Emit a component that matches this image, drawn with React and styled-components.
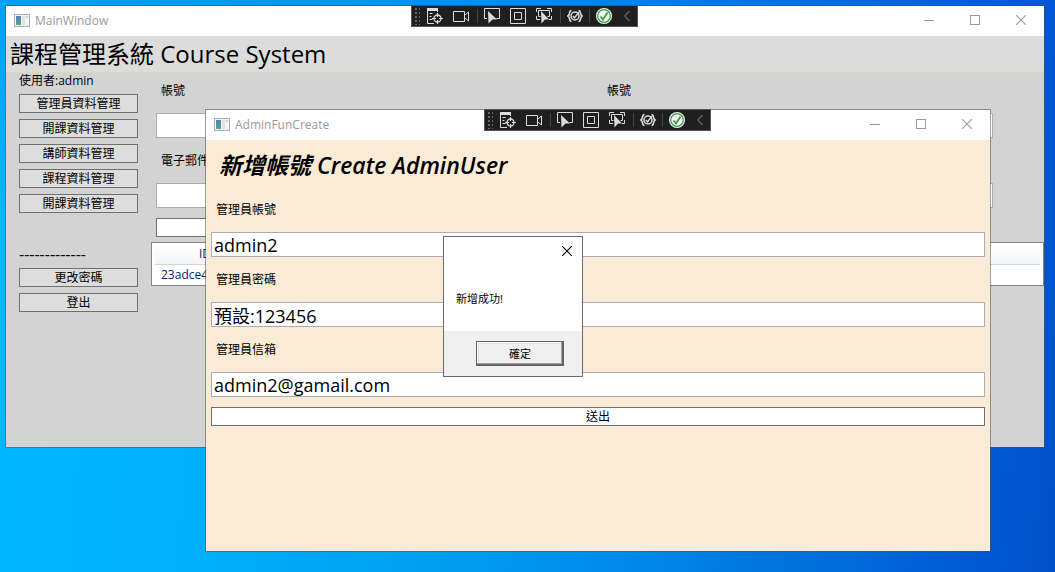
import React from "react";
import styled, { createGlobalStyle, css } from "styled-components";

const GlobalStyle = createGlobalStyle`
  *, *::before, *::after { box-sizing: border-box; }
  body {
    margin: 0;
    font-family: "Open Sans", "Noto Sans CJK TC", sans-serif;
    font-size: 12px;
    line-height: 20px;
    color: #000;
  }
  button, input { font: inherit; color: inherit; margin: 0; }
  h1, h2, p { margin: 0; }
`;

const Desktop = styled.main`
  position: relative;
  min-height: 100vh;
  overflow: hidden;
  background:
    linear-gradient(180deg, rgba(0, 90, 230, 0.25), rgba(0, 90, 230, 0) 40%),
    linear-gradient(95deg, #00b8ff 0%, #00b0fb 20%, #00a4f4 38%, #008eec 58%, #0074dc 75%, #005ad6 92%, #0050c6 100%);
`;

const Window = styled.section`
  position: absolute;
  top: ${(p) => p.$top}px;
  left: ${(p) => p.$left}px;
  right: ${(p) => p.$right}px;
  min-height: 443px;
  border: 1px solid rgba(80, 80, 85, 0.55);
  background: ${(p) => p.$color};
  background-clip: padding-box;
`;

const TitleBar = styled.header`
  display: grid;
  grid-template-columns: 1fr auto 1fr;
  height: 30px;
  background: #fff;
`;

const Caption = styled.div`
  display: flex;
  align-items: center;
  gap: 5px;
  padding-left: 8px;
  color: #999;
`;

const WindowControls = styled.div`
  display: flex;
  justify-content: flex-end;
`;

const ControlButton = styled.button`
  display: flex;
  align-items: center;
  justify-content: center;
  width: ${(p) => p.$width || 46}px;
  height: 28px;
  padding: 0;
  border: 0;
  background: none;
  color: ${(p) => (p.$active ? "#000" : "#999")};
`;

const DebugBar = styled.div`
  display: flex;
  align-items: center;
  height: 22px;
  margin: -1px 1px 0 0;
  padding-left: 3px;
  border: 1px solid #555;
  background: #1f1f1f;
`;

const Grip = styled.span`
  width: 5px;
  height: 17px;
  margin-right: 2px;
  background-image: radial-gradient(circle at 1px 1px, #666 1px, transparent 1px);
  background-size: 4px 4px;
`;

const ToolButton = styled.button`
  display: flex;
  align-items: center;
  justify-content: center;
  width: ${(p) => p.$width || 26}px;
  height: 20px;
  padding: 0;
  border: 0;
  background: none;
  color: #dcdcdc;
`;

const Separator = styled.span`
  width: 1px;
  height: 14px;
  margin: 0 1px 0 ${(p) => (p.$tight ? 1 : 3)}px;
  background: #444;
`;

const SystemHeading = styled.h1`
  height: 37px;
  padding-left: 4px;
  border-bottom: 1px solid #dcd8c0;
  background: #dcdcdc;
  font-size: 24px;
  font-weight: 400;
  line-height: 36px;
  white-space: nowrap;
`;

const MainBody = styled.div`
  display: grid;
  grid-template-columns: 145px 1fr;
`;

const Sidebar = styled.nav`
  display: flex;
  flex-direction: column;
  gap: 6px;
  padding: 0 13px;
`;

const UserName = styled.p`
  line-height: 15px;
`;

const Divider = styled.p`
  padding-top: 27px;
  font-size: 16px;
  line-height: 16px;
`;

const FlatButton = styled.button`
  height: 19px;
  padding: 0;
  border: 1px solid #707070;
  background: ${(p) => (p.$light ? "#fff" : "#ddd")};
  line-height: 17px;
  ${(p) =>
    p.$light &&
    css`
      width: 100%;
      margin-top: 10px;
    `}
`;

const FieldGrid = styled.div`
  display: grid;
  grid-template-columns: 1fr 1fr;
  gap: 8px 55px;
  padding: 3px 51px 0 5px;
`;

const Field = styled.div`
  display: flex;
  flex-direction: column;
`;

const FieldLabel = styled.label`
  padding-left: 5px;
  line-height: 30px;
  margin-bottom: 7px;
`;

const FormLabel = styled.label`
  padding-left: 5px;
  line-height: 45px;
`;

const TextBox = styled.input`
  width: 100%;
  height: 25px;
  padding: 0 2px;
  border: 1px solid #abadb3;
  border-radius: 0;
  background: #fff;
  font-size: 18px;
`;

const QueryRow = styled.div`
  display: flex;
  padding: 0 60px 5px 5px;
`;

const ListFrame = styled.div`
  height: 44px;
  padding: 2px 3px;
  border: 1px solid #828790;
  background: #fff;
`;

const DataTable = styled.table`
  width: 100%;
  border-collapse: collapse;
  table-layout: fixed;

  th {
    height: 19px;
    padding: 0;
    border-bottom: 1px solid #d5d5d5;
    background: linear-gradient(#fff, #f3f4f6);
    font-weight: 400;
    line-height: 18px;
    color: #1b1b50;
  }
  th:first-child { width: 100px; }
  td {
    padding: 0 0 0 6px;
    color: #10207c;
  }
`;

const CreateForm = styled.form`
  padding: 0 5px;
`;

const FormHeading = styled.h2`
  padding: 4px 0 1px 8px;
  font-size: 23px;
  font-style: italic;
  font-weight: 600;
  line-height: 42px;
  white-space: nowrap;
`;

const Dialog = styled.div`
  position: absolute;
  top: 236px;
  left: 443px;
  width: 140px;
  border: 1px solid #6b6b6b;
  background: #fff;
`;

const Message = styled.p`
  padding: 24px 12px 22px;
  font-size: 11px;
`;

const DialogFooter = styled.footer`
  display: flex;
  justify-content: flex-end;
  padding: 10px 18px;
  background: #f0f0f0;
`;

const OkButton = styled.button`
  width: 88px;
  height: 25px;
  padding: 0;
  border: 1px solid #646464;
  background: #f0f0f0;
  box-shadow:
    inset -1px -1px #696969,
    inset -2px -2px #a0a0a0,
    inset 1px 1px #fff,
    inset 2px 2px #e3e3e3;
  font-size: 11px;
  line-height: 22px;
`;

const AppIcon = () => (
  <svg width="16" height="14" viewBox="0 0 16 14" aria-hidden="true">
    <defs>
      <linearGradient id="pane" x1="0" y1="0" x2="0" y2="1">
        <stop offset="0" stopColor="#5a7fb8" />
        <stop offset="1" stopColor="#4fa57c" />
      </linearGradient>
    </defs>
    <rect x=".5" y=".5" width="15" height="12" fill="#f4f5f6" stroke="#a9adb2" />
    <rect x="2" y="2" width="5" height="9" fill="url(#pane)" />
    <rect x="8" y="2" width="3" height="9" fill="#dde1e3" />
    <path d="M12 2h2v2h-2z" fill="#c3d3e6" />
  </svg>
);

const MinimizeIcon = () => (
  <svg width="10" height="10" viewBox="0 0 10 10" aria-hidden="true">
    <path d="M0 5.500h10" stroke="currentColor" />
  </svg>
);

const MaximizeIcon = () => (
  <svg width="10" height="10" viewBox="0 0 10 10" aria-hidden="true">
    <rect x=".5" y=".5" width="9" height="9" fill="none" stroke="currentColor" />
  </svg>
);

const CloseIcon = () => (
  <svg width="10" height="10" viewBox="0 0 10 10" aria-hidden="true">
    <path d="M0 0l10 10M10 0L0 10" stroke="currentColor" strokeWidth="1.100" />
  </svg>
);

const ToolIcon = ({ children, width = 16 }) => (
  <svg width={width} height="16" viewBox={`0 0 ${width} 16`} fill="none" stroke="currentColor" aria-hidden="true">
    {children}
  </svg>
);

const DebugToolbar = () => (
  <DebugBar role="toolbar" aria-label="Debug">
    <Grip />
    <ToolButton type="button" aria-label="Live Visual Tree">
      <ToolIcon>
        <path d="M0 0h11v3H0z" fill="currentColor" stroke="none" />
        <path d="M.5 3v12.500H7M2.500 5.500h3M2.500 8.500h2M2.500 11.500h3M10.500 3v1" />
        <circle cx="10.500" cy="10.500" r="3.500" strokeWidth="1.300" />
        <path d="M10.500 5v4M10.500 12v4M5 10.500h4M12 10.500h4" strokeWidth="1.200" />
      </ToolIcon>
    </ToolButton>
    <ToolButton type="button" aria-label="Record">
      <ToolIcon>
        <path d="M.5 3.500h11v10H.5zM12 7l3.500-3v9L12 10" />
      </ToolIcon>
    </ToolButton>
    <Separator />
    <ToolButton type="button" aria-label="Select Element">
      <ToolIcon>
        <path d="M3 10.500H.5V.5h15v10h-3" />
        <path d="M4 3l9 8.500H8.500L4.500 15.500z" fill="currentColor" stroke="none" />
      </ToolIcon>
    </ToolButton>
    <ToolButton type="button" aria-label="Display Layout Adorners">
      <ToolIcon>
        <path d="M.5.5h15v15H.5zM4.500 4.500h7v7h-7z" />
      </ToolIcon>
    </ToolButton>
    <ToolButton type="button" aria-label="Track Focused Element">
      <ToolIcon>
        <path d="M.5 4V.5H5M11 .5h4.500V4M.5 8v3.500H4M15.500 8v3.500H13" />
        <path d="M4.500 8.500h-2v-6h11v6h-2" />
        <path d="M5 3l8 8.500H9L5.500 15.500z" fill="currentColor" stroke="none" />
      </ToolIcon>
    </ToolButton>
    <Separator />
    <ToolButton type="button" aria-label="Binding Failures">
      <ToolIcon>
        <path d="M4.500 2.500C1.500 2.500 3.500 7 .8 8c2.700 1 .7 5.500 3.700 5.500M11.500 2.500c3 0 1 4.500 3.700 5.500-2.700 1-.7 5.500-3.700 5.500" strokeWidth="1.600" />
        <circle cx="8" cy="8" r="4" strokeWidth="1.500" />
        <path d="M5.800 8l1.700 2 4.500-6" strokeWidth="1.400" />
      </ToolIcon>
    </ToolButton>
    <Separator $tight />
    <ToolButton type="button" aria-label="Hot Reload">
      <ToolIcon>
        <circle cx="8" cy="8" r="8" fill="#f3f3f3" stroke="none" />
        <circle cx="8" cy="8" r="6.300" stroke="#3c9a45" strokeWidth="1.200" />
        <path d="M4.500 8.500l2.500 3 4.500-7" stroke="#3c9a45" strokeWidth="1.800" />
      </ToolIcon>
    </ToolButton>
    <ToolButton type="button" $width={20} aria-label="Collapse">
      <ToolIcon width={6}>
        <path d="M5.500 3L.8 8l4.700 5" stroke="#666" strokeWidth="1.200" />
      </ToolIcon>
    </ToolButton>
  </DebugBar>
);

const WindowTitle = ({ title }) => (
  <TitleBar>
    <Caption>
      <AppIcon />
      {title}
    </Caption>
    <DebugToolbar />
    <WindowControls>
      <ControlButton type="button" aria-label="Minimize"><MinimizeIcon /></ControlButton>
      <ControlButton type="button" aria-label="Maximize"><MaximizeIcon /></ControlButton>
      <ControlButton type="button" aria-label="Close"><CloseIcon /></ControlButton>
    </WindowControls>
  </TitleBar>
);

const menu = ["管理員資料管理", "開課資料管理", "講師資料管理", "課程資料管理", "開課資料管理"];

const queryFields = [
  { id: "account", label: "帳號" },
  { id: "account-right", label: "帳號" },
  { id: "email", label: "電子郵件" },
  { id: "email-right", label: "電子郵件" },
];

const createFields = [
  { id: "admin-account", label: "管理員帳號", value: "admin2" },
  { id: "admin-password", label: "管理員密碼", value: "預設:123456" },
  { id: "admin-email", label: "管理員信箱", value: "admin2@gamail.com" },
];

export default function App() {
  return (
    <>
      <GlobalStyle />
      <Desktop>
        <Window $top={5} $left={5} $right={10} $color="#d3d3d3">
          <WindowTitle title="MainWindow" />
          <SystemHeading>課程管理系統 Course System</SystemHeading>
          <MainBody>
            <Sidebar>
              <UserName>使用者:admin</UserName>
              {menu.map((item, i) => (
                <FlatButton type="button" key={i}>{item}</FlatButton>
              ))}
              <Divider>-------------</Divider>
              <FlatButton type="button">更改密碼</FlatButton>
              <FlatButton type="button">登出</FlatButton>
            </Sidebar>
            <div>
              <FieldGrid>
                {queryFields.map((f) => (
                  <Field key={f.id}>
                    <FieldLabel htmlFor={f.id}>{f.label}</FieldLabel>
                    <TextBox id={f.id} />
                  </Field>
                ))}
              </FieldGrid>
              <QueryRow>
                <FlatButton type="button" $light aria-label="查詢" />
              </QueryRow>
              <ListFrame>
                <DataTable>
                  <thead>
                    <tr><th>ID</th><th /></tr>
                  </thead>
                  <tbody>
                    <tr><td>23adce4</td><td /></tr>
                  </tbody>
                </DataTable>
              </ListFrame>
            </div>
          </MainBody>
        </Window>

        <Window $top={109} $left={205} $right={64} $color="#faebd7">
          <WindowTitle title="AdminFunCreate" />
          <CreateForm onSubmit={(e) => e.preventDefault()}>
            <FormHeading>新增帳號 Create AdminUser</FormHeading>
            {createFields.map((f) => (
              <Field key={f.id}>
                <FormLabel htmlFor={f.id}>{f.label}</FormLabel>
                <TextBox id={f.id} defaultValue={f.value} />
              </Field>
            ))}
            <FlatButton type="submit" $light>送出</FlatButton>
          </CreateForm>
        </Window>

        <Dialog role="dialog" aria-label="新增成功!">
          <WindowControls>
            <ControlButton type="button" $width={30} $active aria-label="Close"><CloseIcon /></ControlButton>
          </WindowControls>
          <Message>新增成功!</Message>
          <DialogFooter>
            <OkButton type="button">確定</OkButton>
          </DialogFooter>
        </Dialog>
      </Desktop>
    </>
  );
}
